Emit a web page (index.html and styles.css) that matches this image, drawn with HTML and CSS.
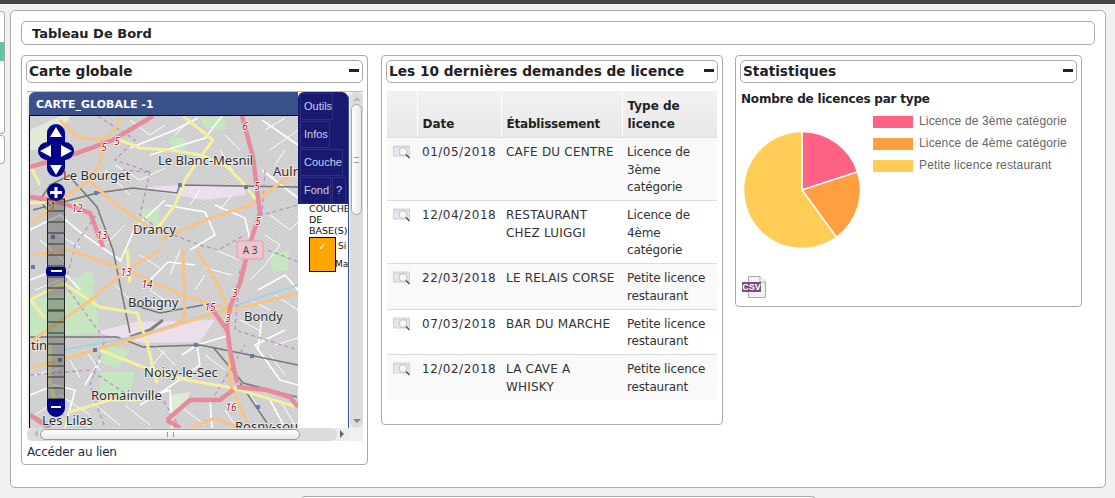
FILE: index.html
```html
<!DOCTYPE HTML>
<html lang="fr">
<head>
	<meta charset="UTF-8">
	<title>Tableau De Bord</title>
	<link rel="stylesheet" href="styles.css">
</head>
<body>
<div class="topbar"></div>
<div class="shell">
	<div class="side_stubs">
		<div class="stub stub_menu"><div class="stub_active"></div></div>
		<div class="stub stub_small"></div>
	</div>
	<div class="main_box">
		<div class="page_title">Tableau De Bord</div>
		<div class="panels">

			<!-- carte -->
			<div class="panel panel_map">
				<div class="panel_head"><span>Carte globale</span><i class="minus"></i></div>
				<div class="map_scroll">
					<div class="map_row">
						<div class="widget">
							<div class="widget_left">
								<div class="widget_title">CARTE_GLOBALE -1</div>
								<svg class="map" viewBox="30 116 268 312" width="268" height="312">
									<defs>
										<pattern id="hatch" width="3" height="3" patternUnits="userSpaceOnUse" patternTransform="rotate(32)">
											<rect width="3" height="3" fill="#d4d4d4"/>
											<line x1="0" y1="0" x2="3" y2="0" stroke="#c0c0c0" stroke-width="1"/>
										</pattern>
									</defs>
									<rect x="30" y="116" width="268" height="312" fill="url(#hatch)"/>
									<!-- zones -->
									<path class="z_green" d="M30 300L93 287L100 333L30 337Z"/>
									<path class="z_green" d="M100 372L135 372L130 395L100 398Z"/>
									<path class="z_green" d="M200 118L226 118L224 130L205 128Z"/>
									<path class="z_green" d="M160 330L205 315L205 325L165 335Z"/>
									<path class="z_green" d="M170 138L185 138L185 150L172 150Z"/>
									<path class="z_green" d="M140 210L160 208L158 225L142 224Z"/>
									<path class="z_green" d="M270 255L290 250L288 270L272 272Z"/>
									<path class="z_green" d="M105 345L130 350L118 368L100 362Z"/>
									<path class="z_green" d="M70 280L92 270L95 285L78 292Z"/>
									<path class="z_light" d="M30 130L60 116L70 116L50 150L30 150Z"/>
									<path class="z_light" d="M170 395L190 392L185 410L168 412Z"/>
									<path class="z_lilac" d="M135 188L180 185L245 187L245 195L205 200L175 195Z"/>
									<path class="z_lilac" d="M95 332L135 322L215 320L200 342L143 343L110 336Z"/>
									<!-- rues -->
									<g class="rd_white">
										<path d="M150 155L205 138L222 116"/>
										<path d="M130 148L175 130L198 118"/>
										<path d="M30 230L60 215L80 232L120 260"/>
										<path d="M120 262L135 228L165 200"/>
										<path d="M165 205L205 212L215 235L190 250"/>
										<path d="M215 205L245 218L250 240"/>
										<path d="M262 170L298 198"/>
										<path d="M262 120L298 145"/>
										<path d="M258 290L285 275L298 290"/>
										<path d="M285 330L255 345L280 380L298 385"/>
										<path d="M182 355L197 345L230 335"/>
										<path d="M197 345L200 365L165 390L140 405"/>
										<path d="M30 395L55 385L75 390L65 428"/>
										<path d="M140 400L170 390L172 428"/>
										<path d="M30 280L60 268L80 290"/>
										<path d="M100 360L85 385"/>
										<path d="M210 400L212 428"/>
										<path d="M270 400L285 428"/>
										<path d="M195 265L168 262L150 280"/>
										<path d="M262 315L258 350"/>
									</g>
									<g class="rd_thin">
										<path d="M130 120L150 135L165 125"/>
										<path d="M265 130L285 118M270 150L298 130M275 165L285 150"/>
										<path d="M190 120L175 135M225 135L240 150M220 150L235 175"/>
										<path d="M115 165L140 180L165 168M130 195L105 170"/>
										<path d="M190 205L200 190M220 210L232 195M270 215L290 230L298 222"/>
										<path d="M265 235L280 245L265 265L250 280"/>
										<path d="M215 250L240 260M205 268L232 275"/>
										<path d="M105 245L125 225M140 255L160 268M170 275L180 250"/>
										<path d="M60 235L80 248M40 240L65 262M35 290L60 280"/>
										<path d="M115 285L130 300M150 290L172 305M195 290L205 275"/>
										<path d="M250 300L270 310M275 295L298 310"/>
										<path d="M240 320L262 332M275 345L298 338M270 355L285 375"/>
										<path d="M155 345L175 365M205 355L225 370M165 350L150 368"/>
										<path d="M100 370L85 350M70 360L80 378M35 375L60 368"/>
										<path d="M60 395L90 415M95 405L120 425M125 405L150 425"/>
										<path d="M185 410L205 425M225 410L235 425M250 395L260 410M280 400L295 425"/>
										<path d="M35 415L50 405M78 418L90 428"/>
									</g>
									<!-- voies ferrees -->
									<g class="rd_rail">
										<path d="M33 210L97 193L133 188L177 193L180 185L298 187"/>
										<path d="M70 177L97 207L113 250L130 333"/>
										<path d="M30 337L117 337L143 347L200 345L240 353L298 365"/>
										<path d="M133 305L160 313L203 305"/>
										<path d="M213 347L243 383L297 397"/>
										<path d="M240 383L267 423"/>
										<path d="M70 175L50 185L40 200L47 210"/>
									</g>
									<path class="rd_rail_big" d="M130 337L150 330L163 320"/>
									<path class="rd_canal" d="M63 350L133 337L213 313L298 285"/>
									<!-- limites -->
									<g class="rd_limit">
										<path d="M98 116L135 140L115 160L150 172L120 170"/>
										<path d="M150 172L140 215L160 230L200 245L218 250L245 235"/>
										<path d="M265 170L262 215L298 205"/>
										<path d="M100 210L75 245L65 285L105 340L90 385L105 428"/>
										<path d="M240 270L235 330L298 350"/>
										<path d="M30 375L90 370L135 400L160 395L180 428"/>
										<path d="M215 395L245 345"/>
										<path d="M268 250L298 262"/>
									</g>
									<!-- routes secondaires -->
									<g class="rd_yellow">
										<path d="M183 116L213 140L195 165L185 180L175 205L160 225L150 232"/>
										<path d="M120 140L140 148L170 150L200 155L225 165L245 185L256 200"/>
										<path d="M30 165L40 185"/>
										<path d="M30 300L63 283L100 307L137 313L147 343L157 383"/>
										<path d="M100 350L143 367L187 380L233 388L297 407"/>
										<path d="M50 343L50 383L57 410"/>
										<path d="M127 250L130 283"/>
										<path d="M67 413L110 400L140 400"/>
										<path d="M30 300L45 318"/>
										<path d="M30 203L60 202"/>
									</g>
									<g class="rd_orange">
										<path d="M60 120L77 137L103 140L100 163L90 180L110 200L150 228"/>
										<path d="M120 116L115 130L103 140"/>
										<path d="M90 180L60 200L30 225"/>
										<path d="M160 240L205 220L250 205L298 170"/>
										<path d="M160 250L127 270L87 303L33 340"/>
										<path d="M70 250L133 273L177 293L230 310"/>
										<path d="M197 250L217 283L228 307L230 383L247 423"/>
										<path d="M183 250L185 317L172 327"/>
										<path d="M30 368L95 350L200 318L298 293"/>
										<path d="M30 255L70 250"/>
										<path d="M190 428L215 418L240 428"/>
									</g>
									<g class="rd_pink">
										<path d="M153 116L113 140L77 153L30 167"/>
										<path d="M30 197L53 200L90 213L103 247"/>
										<path d="M242 116L253 157L260 213L250 243L240 283L230 307L227 327L230 350L237 383"/>
										<path d="M237 387L267 390L290 397L298 407"/>
										<path d="M233 390L220 400L190 400L167 420"/>
										<path d="M208 303L227 330"/>
										<path d="M30 415L50 428"/>
										<path d="M167 420L180 428"/>
									</g>
									<!-- stations -->
									<g class="stn">
										<rect x="178" y="183" width="4" height="4"/><rect x="244" y="185" width="4" height="4"/>
										<rect x="94" y="191" width="4" height="4"/><rect x="31" y="265" width="4" height="4"/>
										<rect x="93" y="348" width="4" height="4"/><rect x="58" y="358" width="4" height="4"/>
										<rect x="194" y="343" width="4" height="4"/><rect x="250" y="354" width="4" height="4"/>
										<rect x="256" y="405" width="4" height="4"/><rect x="51" y="235" width="4" height="4"/>
									</g>
									<!-- numeros -->
									<g class="rd_num">
										<text x="245" y="130">6</text><text x="117" y="145">5</text><text x="104" y="151">5</text>
										<text x="257" y="190">5</text><text x="258" y="225">5</text><text x="77" y="212">12</text>
										<text x="102" y="239">13</text><text x="50" y="210">11</text><text x="126" y="276">13</text>
										<text x="147" y="288">14</text><text x="210" y="311">15</text><text x="235" y="297">3</text>
										<text x="228" y="322">3</text><text x="231" y="411">16</text>
									</g>
									<rect class="shield" x="237" y="241" width="26" height="18" rx="2"/>
									<text class="shield_txt" x="250" y="254">A 3</text>
									<!-- villes -->
									<g class="city">
										<text x="158" y="165">Le Blanc-Mesnil</text>
										<text x="273" y="176">Aulnay</text>
										<text x="63" y="180">Le Bourget</text>
										<text x="133" y="234">Drancy</text>
										<text x="128" y="307">Bobigny</text>
										<text x="244" y="321">Bondy</text>
										<text x="31" y="350">tin</text>
										<text x="144" y="377">Noisy-le-Sec</text>
										<text x="91" y="400">Romainville</text>
										<text x="42" y="425">Les Lilas</text>
										<text x="235" y="431">Rosny-sous-Bois</text>
									</g>
									<!-- navigation -->
									<g class="nav">
										<circle cx="56" cy="133" r="9"/><circle cx="56" cy="168" r="9"/>
										<rect x="47" y="133" width="18" height="35"/>
										<circle cx="47" cy="151" r="9"/><circle cx="65" cy="151" r="9"/>
										<rect x="47" y="142" width="18" height="18"/>
										<circle cx="56" cy="192" r="9"/>
										<rect class="zoom_track" x="47.5" y="199" width="17" height="200"/>
										<path d="M47 399H65V408A9 9 0 0 1 47 408Z"/>
										<rect x="46" y="267" width="20" height="9" rx="3"/>
									</g>
									<path class="zoom_ticks" d="M47 211H65M47 222H65M47 233H65M47 244H65M47 255H65M47 266H65M47 277H65M47 288H65M47 299H65M47 310H65M47 311H65M47 322H65M47 333H65M47 344H65M47 355H65M47 366H65M47 377H65M47 388H65"/>
									<g class="nav_white">
										<path d="M56 127L62 137H50Z"/>
										<path d="M56 175L62 165H50Z"/>
										<path d="M40 151L51 145V157Z"/>
										<path d="M72 151L61 145V157Z"/>
										<rect x="50" y="191" width="12" height="3"/>
										<rect x="54.500" y="187" width="3" height="11"/>
										<rect x="51" y="270" width="11" height="2"/>
										<rect x="51" y="406" width="10" height="2"/>
									</g>
								</svg>
							</div>
							<div class="widget_side">
								<div class="tabs">
									<span class="tab tab_outils">Outils</span>
									<span class="tab tab_infos">Infos</span>
									<span class="tab tab_couche">Couche</span>
									<div class="tab_line">
										<span class="tab tab_fond">Fond</span>
										<span class="tab tab_help">?</span>
									</div>
								</div>
								<div class="side_body">
									<div class="side_label">COUCHE<br>DE<br>BASE(S)</div>
									<div class="layer_row">
										<div class="layer_swatch">✓</div>
										<div class="layer_names"><span>Si</span><span class="layer_map">Map</span></div>
									</div>
								</div>
							</div>
						</div>
						<div class="vscroll">
							<i class="arrow_up"></i>
							<div class="vthumb"><b></b></div>
							<i class="arrow_down"></i>
						</div>
					</div>
					<div class="hscroll">
						<i class="arrow_left"></i>
						<div class="htrack"><div class="hthumb"><b></b></div></div>
						<i class="arrow_right"></i>
					</div>
				</div>
				<a class="map_link" href="javascript:;">Accéder au lien</a>
			</div>

			<!-- demandes -->
			<div class="panel panel_list">
				<div class="panel_head"><span>Les 10 dernières demandes de licence</span><i class="minus"></i></div>
				<table class="grid">
					<thead>
						<tr><th class="c_icon"></th><th class="c_date">Date</th><th class="c_name">Établissement</th><th class="c_type">Type de licence</th></tr>
					</thead>
					<tbody>
						<tr><td><svg class="zoom_icon" viewBox="0 0 18 14"><use href="#loupe"/></svg></td><td class="t_date">01/05/2018</td><td class="t_name">CAFE DU CENTRE</td><td class="t_type">Licence de 3ème catégorie</td></tr>
						<tr><td><svg class="zoom_icon" viewBox="0 0 18 14"><use href="#loupe"/></svg></td><td class="t_date">12/04/2018</td><td class="t_name">RESTAURANT CHEZ LUIGGI</td><td class="t_type">Licence de 4ème catégorie</td></tr>
						<tr><td><svg class="zoom_icon" viewBox="0 0 18 14"><use href="#loupe"/></svg></td><td class="t_date">22/03/2018</td><td class="t_name">LE RELAIS CORSE</td><td class="t_type">Petite licence restaurant</td></tr>
						<tr><td><svg class="zoom_icon" viewBox="0 0 18 14"><use href="#loupe"/></svg></td><td class="t_date">07/03/2018</td><td class="t_name">BAR DU MARCHE</td><td class="t_type">Petite licence restaurant</td></tr>
						<tr><td><svg class="zoom_icon" viewBox="0 0 18 14"><use href="#loupe"/></svg></td><td class="t_date">12/02/2018</td><td class="t_name">LA CAVE A WHISKY</td><td class="t_type">Petite licence restaurant</td></tr>
					</tbody>
				</table>
			</div>

			<!-- statistiques -->
			<div class="panel panel_stats">
				<div class="panel_head"><span>Statistiques</span><i class="minus"></i></div>
				<div class="stats_title">Nombre de licences par type</div>
				<div class="chart">
					<svg class="pie" viewBox="0 0 120 120" width="120" height="120">
						<path fill="#ff6384" stroke="#fff" stroke-width="1.500" d="M60 60V1.500A58.500 58.500 0 0 1 115.600 41.900Z"/>
						<path fill="#ff9f40" stroke="#fff" stroke-width="1.500" d="M60 60L115.600 41.900A58.500 58.500 0 0 1 94.400 107.300Z"/>
						<path fill="#ffcd56" stroke="#fff" stroke-width="1.500" d="M60 60L94.400 107.300A58.500 58.500 0 1 1 60 1.500Z"/>
					</svg>
					<ul class="legend">
						<li><i class="sw_pink"></i>Licence de 3ème catégorie</li>
						<li><i class="sw_orange"></i>Licence de 4ème catégorie</li>
						<li><i class="sw_yellow"></i>Petite licence restaurant</li>
					</ul>
				</div>
				<div class="csv">
					<svg class="csv_page" viewBox="0 0 18 22" width="18" height="22">
						<path d="M.5 .5H12L17.500 6V21.500H.5Z" fill="#f2f2f2" stroke="#aaa"/>
						<path d="M12 .5V6H17.500" fill="#fff" stroke="#aaa"/>
					</svg>
					<span class="csv_tag">CSV</span>
				</div>
			</div>
		</div>
	</div>
</div>
<div class="bottom_stub"></div>

<svg class="defs_only" width="0" height="0">
	<symbol id="loupe" viewBox="0 0 18 14">
		<path d="M.5 1H16.500V11H.5Z" fill="#e6e6f0" stroke="#d0d0d8"/>
		<path d="M1 1.500H16V3H1Z" fill="#d8d8e4"/>
		<circle cx="10" cy="6.500" r="4" fill="#f6f6f8" stroke="#c0c0c4"/>
		<path d="M13 9.500L16.500 13" stroke="#444" stroke-width="1.200"/>
	</symbol>
</svg>
</body>
</html>
```

FILE: styles.css
```css
*{
	padding:0;
	margin:0;
	box-sizing:border-box;
}
ul,li{
	list-style:none;
}
body{
	background:#f1f1f1;
	font-family:"DejaVu Sans",sans-serif;
	font-size:12px;
	color:#222;
	overflow:hidden;
}
.topbar{
	height:4px;
	background:#444;
}
.shell{
	display:flex;
	align-items:flex-start;
	padding-top:6px;
}

/**bouts du menu de gauche**/
.side_stubs{
	width:10px;
	flex:none;
	padding-top:1px;
}
.stub{
	width:5px;
	background:#fff;
	border:1px solid #aaa;
	border-left:none;
	border-radius:0 4px 4px 0;
}
.stub_menu{
	height:123px;
	padding-top:30px;
	margin-bottom:1px;
}
.stub_active{
	height:19px;
	background:#5ac8a4;
}
.stub_small{
	height:29px;
}

/**cadre principal**/
.main_box{
	width:1096px;
	height:478px;
	padding:10px;
	background:#fff;
	border:1px solid #aaa;
	border-radius:5px;
}
.page_title{
	height:24px;
	padding-left:10px;
	border:1px solid #aaa;
	border-radius:5px;
	font-size:13px;
	font-weight:bold;
	line-height:24px;
}
.panels{
	display:flex;
	align-items:flex-start;
	margin-top:10px;
}
.panel{
	flex:none;
	padding:4px;
	background:#fff;
	border:1px solid #aaa;
	border-radius:4px;
}
.panel_map{
	width:347px;
	height:410px;
	margin-right:13px;
}
.panel_list{
	width:342px;
	height:370px;
	margin-right:12px;
}
.panel_stats{
	width:347px;
	height:252px;
}
.panel_head{
	display:flex;
	justify-content:space-between;
	align-items:center;
	height:23px;
	padding:0 3px 2px 2px;
	border:1px solid #aaa;
	border-radius:5px;
	font-size:13.7px;
	font-weight:bold;
	white-space:nowrap;
}
.minus{
	display:block;
	width:10px;
	height:3px;
	background:#222;
}

/**carte**/
.map_scroll{
	width:336px;
	margin:8px 0 0 1px;
	background:#f0f0f0;
	border-top:1px solid #bbb;
}
.map_row{
	display:flex;
	height:336px;
}
.widget{
	display:flex;
	width:320px;
	margin-left:2px;
	overflow:hidden;
	border-radius:6px 6px 0 0;
	background:#fff;
}
.widget_left{
	width:269px;
	flex:none;
	background:#3a5088;
}
.widget_title{
	height:24px;
	padding-left:7px;
	color:#fff;
	font-size:11px;
	font-weight:bold;
	line-height:26px;
	white-space:nowrap;
}
.map{
	display:block;
	margin-left:1px;
	outline:1px solid #000;
}
.widget_side{
	width:51px;
	flex:none;
	border-right:1px solid #3a5088;
	background:#fff;
	overflow:hidden;
}
.tabs{
	height:112px;
	padding:1px 0 0 2px;
	background:#191970;
	border-radius:6px 6px 0 0;
}
.tab{
	display:block;
	height:27px;
	margin-bottom:1px;
	padding-left:3px;
	border:1px solid #2c3080;
	background:#191970;
	color:#c8d0f0;
	font-family:"Liberation Sans",sans-serif;
	font-size:11px;
	line-height:25px;
}
.tab_outils{
	width:33px;
}
.tab_infos{
	width:30px;
}
.tab_couche{
	width:43px;
}
.tab_line{
	display:flex;
}
.tab_fond{
	width:31px;
	margin-right:1px;
}
.tab_help{
	width:14px;
}
.side_body{
	padding:0 0 0 11px;
	font-size:9.5px;
	line-height:11px;
	color:#111;
}
.side_label{
	margin-top:-1px;
	white-space:nowrap;
}
.layer_row{
	display:flex;
	margin-top:1px;
}
.layer_swatch{
	width:27px;
	height:35px;
	flex:none;
	border:1px solid #000;
	background:#ffa500;
	color:#fff;
	text-align:center;
	font-size:10px;
	line-height:18px;
}
.layer_names{
	display:flex;
	flex-direction:column;
	gap:7px;
	padding:4px 0 0 2px;
	font-size:9px;
	white-space:nowrap;
}
.layer_map{
	margin-left:-3px;
}

/**barres de defilement**/
.vscroll{
	position:relative;
	display:flex;
	flex-direction:column;
	align-items:center;
	width:13px;
	margin-left:1px;
	padding-top:12px;
	background:#dcdcdc;
	border-radius:6px;
}
.vthumb{
	display:flex;
	align-items:center;
	justify-content:center;
	width:11px;
	height:111px;
	background:linear-gradient(to right,#fff,#e8e8e8);
	border:1px solid #aaa;
	border-radius:6px;
}
.vthumb b{
	width:5px;
	height:6px;
	border-top:1px solid #999;
	border-bottom:1px solid #999;
}
.arrow_up,.arrow_down,.arrow_left,.arrow_right{
	position:absolute;
	width:0;
	height:0;
	border:4px solid transparent;
}
.arrow_up{
	top:1px;
	border-bottom-color:#bbb;
}
.arrow_down{
	bottom:1px;
	border-top-color:#888;
}
.hscroll{
	position:relative;
	height:13px;
	width:323px;
	padding-right:13px;
	background:#ececec;
	border-radius:6px;
}
.htrack{
	height:13px;
	padding:1px 0;
	background:#dcdcdc;
	border-radius:6px;
}
.hthumb{
	display:flex;
	align-items:center;
	justify-content:center;
	width:260px;
	height:11px;
	margin-left:13px;
	background:linear-gradient(to bottom,#fff,#e8e8e8);
	border:1px solid #999;
	border-radius:6px;
}
.hthumb b{
	width:7px;
	height:5px;
	border-left:1px solid #999;
	border-right:1px solid #999;
}
.arrow_left{
	left:3px;
	top:2px;
	border-right-color:#bbb;
}
.arrow_right{
	right:2px;
	top:2px;
	border-left-color:#666;
}
.map_link{
	display:block;
	margin:4px 0 0 1px;
	color:#1a2a4a;
	font-size:12px;
	letter-spacing:-.2px;
	line-height:15px;
	text-decoration:none;
}

/**traits de la carte**/
.map path{
	fill:none;
}
.map .z_green{
	fill:#c6e6c0;
}
.map .z_light{
	fill:#e2ead6;
}
.map .z_lilac{
	fill:#ecdfec;
}
.rd_white path{
	stroke:#fff;
	stroke-width:1.6;
}
.rd_thin path{
	stroke:#fff;
	stroke-width:1;
}
.rd_rail path{
	stroke:#777;
	stroke-width:1.5;
}
.map .rd_rail_big{
	stroke:#808080;
	stroke-width:3;
}
.map .rd_canal{
	stroke:#a8d0dc;
	stroke-width:2;
}
.rd_limit path{
	stroke:#bb90cc;
	stroke-width:1.3;
	stroke-dasharray:4 3;
}
.rd_yellow path{
	stroke:#f3f0a0;
	stroke-width:3;
}
.rd_orange path{
	stroke:#f6c486;
	stroke-width:3;
}
.rd_pink path{
	stroke:#e68a9c;
	stroke-width:4.5;
}
.stn rect{
	fill:#6a78b0;
}
.rd_num text{
	fill:#a8122a;
	font-family:"Noto Sans",sans-serif;
	font-size:10px;
	font-style:italic;
	text-anchor:middle;
	paint-order:stroke;
	stroke:#fff;
	stroke-width:1.5;
}
.shield{
	fill:#f0c4cc;
	stroke:#d8a0aa;
}
.shield_txt{
	fill:#444;
	font-family:"Noto Sans",sans-serif;
	font-size:10px;
	text-anchor:middle;
}
.city text{
	fill:#2a2a2a;
	font-family:"Noto Sans",sans-serif;
	font-size:13px;
	paint-order:stroke;
	stroke:#fff;
	stroke-width:1.5;
	stroke-opacity:.7;
}
.nav circle,.nav rect,.map .nav path{
	fill:#00008b;
}
.map .nav .zoom_track{
	fill:#333;
	fill-opacity:.35;
	stroke:#222;
}
.map .zoom_ticks{
	stroke:#333;
	stroke-width:1;
}
.map .nav_white path,.nav_white rect{
	fill:#fff;
}

/**tableau**/
.grid{
	width:330px;
	margin:8px 0 0 1px;
	border-collapse:collapse;
	table-layout:fixed;
	font-size:12px;
	line-height:17.5px;
}
.grid th{
	padding:6px 5px 4px;
	background:linear-gradient(to bottom,#f1f1f1,#e8e8e8);
	border-left:1px solid #fff;
	border-bottom:1px solid #ddd;
	font-weight:bold;
	line-height:18px;
	text-align:left;
	vertical-align:bottom;
}
.grid th:first-child{
	border-left:none;
}
.c_icon{
	width:30px;
}
.c_date{
	width:84px;
}
.c_name{
	width:121px;
	letter-spacing:-.2px;
}
.c_type{
	width:95px;
}
.grid td{
	padding:6px 5px 3.5px;
	border-bottom:1px solid #ddd;
	vertical-align:top;
	color:#333;
}
.grid .t_date{
	letter-spacing:.5px;
}
.grid .t_name{
	letter-spacing:.2px;
}
.grid .t_type{
	letter-spacing:-.15px;
}
.grid tr:last-child td{
	border-bottom:none;
}
.grid tbody tr:nth-child(odd) td{
	background:#f9f9f9;
}
.zoom_icon{
	display:block;
	width:18px;
	height:14px;
	margin:1px 0 0 1px;
}
.defs_only{
	position:absolute;
}

/**statistiques**/
.stats_title{
	margin:9px 0 0 1px;
	font-size:12px;
	font-weight:bold;
	letter-spacing:-.2px;
	line-height:15px;
}
.chart{
	display:flex;
	align-items:flex-start;
	margin-left:2px;
}
.pie{
	display:block;
	flex:none;
	margin-top:23px;
}
.legend{
	padding:4px 0 0 11px;
	color:#666;
	font-family:"Liberation Sans",sans-serif;
	font-size:12px;
	letter-spacing:.15px;
}
.legend li{
	display:flex;
	align-items:flex-start;
	height:22px;
	line-height:20px;
	white-space:nowrap;
}
.legend i{
	display:block;
	width:40px;
	height:12px;
	margin:5px 6px 0 0;
}
.sw_pink{
	background:#ff6384;
}
.sw_orange{
	background:#ff9f40;
}
.sw_yellow{
	background:#ffcd56;
}
.csv{
	position:relative;
	width:25px;
	height:22px;
	margin:26px 0 0 2px;
}
.csv_page{
	display:block;
	margin-left:6px;
}
.csv_tag{
	position:absolute;
	left:0;
	top:6px;
	width:19px;
	height:10px;
	background:#7d4f80;
	color:#fff;
	font-family:"Liberation Sans",sans-serif;
	font-size:9px;
	font-weight:bold;
	line-height:10px;
	text-align:center;
}

.bottom_stub{
	width:515px;
	height:20px;
	margin:8px 0 0 301px;
	background:#fff;
	border:1px solid #aaa;
	border-radius:4px;
}
```
